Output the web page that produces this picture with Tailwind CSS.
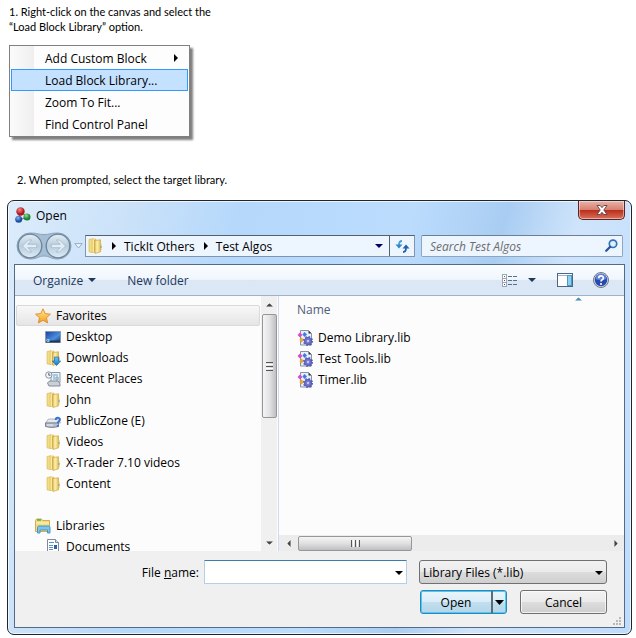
<!DOCTYPE html>
<html lang="en">
<head>
  <meta charset="UTF-8">
  <meta name="viewport" content="width=device-width, initial-scale=1.0">
  <title>Load Block Library</title>
  <script src="https://cdn.jsdelivr.net/npm/@tailwindcss/browser@4"></script>
</head>
<body class="bg-white text-black text-[12px] leading-[15px] font-['Open_Sans','Noto_Sans',sans-serif]">

  <!-- Shared icons -->
  <svg class="absolute size-0" aria-hidden="true">
    <defs>
      <linearGradient id="gold" x1="0" x2="1"><stop offset="0" stop-color="#f3da7c"/><stop offset=".5" stop-color="#faeca8"/><stop offset="1" stop-color="#dfb94c"/></linearGradient>
      <linearGradient id="star" x1="0" y1="0" x2="0" y2="1"><stop offset="0" stop-color="#fff08a"/><stop offset="1" stop-color="#f59a23"/></linearGradient>
      <linearGradient id="screen" x1="0" x2="1" y2="1"><stop offset="0" stop-color="#1c3f9c"/><stop offset=".6" stop-color="#4b8fdf"/><stop offset="1" stop-color="#123075"/></linearGradient>
      <linearGradient id="arrow" x1="0" y1="0" x2="0" y2="1"><stop offset="0" stop-color="#6ccbf7"/><stop offset="1" stop-color="#1473c4"/></linearGradient>
      <radialGradient id="red" cx=".4" cy=".3"><stop offset="0" stop-color="#f08a84"/><stop offset="1" stop-color="#b3161b"/></radialGradient>
      <radialGradient id="blue" cx=".4" cy=".3"><stop offset="0" stop-color="#8ab6ee"/><stop offset="1" stop-color="#1c4da6"/></radialGradient>
      <radialGradient id="green" cx=".4" cy=".3"><stop offset="0" stop-color="#8fe08a"/><stop offset="1" stop-color="#188032"/></radialGradient>
      <linearGradient id="orb" x1="0" y1="0" x2="0" y2="1"><stop offset="0" stop-color="#e3edf5"/><stop offset=".5" stop-color="#b9cddd"/><stop offset="1" stop-color="#dcebf6"/></linearGradient>
      <symbol id="folder" viewBox="0 0 16 16">
        <path d="M2 1.500l4-.8v13.800l-4-.6z" fill="#f3dc82" stroke="#d5b659" stroke-width=".6"/>
        <path d="M5 1h4v13.500H5z" fill="url(#gold)" stroke="#dcc069" stroke-width=".6"/>
        <path d="M8 2.500l5.500-.7v12L8 15.500z" fill="url(#gold)" stroke="#cfa844" stroke-width=".7"/>
        <path d="M13.500 6h1v6l-1 1.500z" fill="#e4c357"/>
        <path d="M7.500 2v12.500" stroke="#c9a74a" stroke-width=".8"/>
        <path d="M14 8v2" stroke="#5b93c9" stroke-width=".8"/>
      </symbol>
      <symbol id="lib" viewBox="0 0 16 16">
        <path d="M3.500.5h8l3 3v11.500h-11z" fill="#e9eef7" stroke="#7d8796" stroke-width=".9"/>
        <path d="M11.500.5v3h3z" fill="#26324a"/>
        <path d="M3 2.500l2.500 2.500L3 7.500.5 5z" fill="#d64bd0"/>
        <path d="M7.500 2L10 4.500 7.500 7 5.500 4.500z" fill="#3c7be0"/>
        <path d="M4.500 7.500L7 10l-2.500 2.500L2.300 10z" fill="#eba92b"/>
        <circle cx="11" cy="11" r="3.500" fill="#7277d0" stroke="#5156b4" stroke-width="1"/>
        <circle cx="11" cy="11" r="4.300" fill="none" stroke="#5156b4" stroke-width="1.400" stroke-dasharray="1.700 1.680"/>
        <circle cx="11" cy="11" r="1.200" fill="#c5c8f4"/>
      </symbol>
      <symbol id="down" viewBox="0 0 8 4"><path d="M0 0h8L4 4z" fill="currentColor"/></symbol>
      <symbol id="right" viewBox="0 0 4 8"><path d="M0 0v8l4-4z" fill="currentColor"/></symbol>
    </defs>
  </svg>

  <!-- Step 1 -->
  <section class="pt-1 pl-[9px]">
    <p class="text-[11px] leading-[15px] font-['Lato',sans-serif]">1. Right-click on the canvas and select the<br>“Load Block Library” option.</p>
    <div role="menu" class="mt-[11px] w-[181px] border border-[#808080] bg-[linear-gradient(to_right,#fbfbfb_0,#efefef_24px,#fdfdfd_24px)] p-px shadow-[3px_3px_2px_rgba(0,0,0,0.5)]">
      <button role="menuitem" class="flex w-full h-[22px] items-center justify-between pl-[34px] pr-[10px]">Add Custom Block <svg class="w-1 h-2"><use href="#right"/></svg></button>
      <button role="menuitem" class="flex w-full h-[22px] items-center border border-[#3399ff] bg-[#c4e1ff] pl-[33px]">Load Block Library...</button>
      <button role="menuitem" class="flex w-full h-[22px] items-center pl-[34px]">Zoom To Fit...</button>
      <button role="menuitem" class="flex w-full h-[22px] items-center pl-[34px]">Find Control Panel</button>
    </div>
  </section>

  <!-- Step 2 -->
  <p class="mt-[35px] pl-[17px] text-[11px] leading-[15px] font-['Lato',sans-serif]">2. When prompted, select the target library.</p>

  <div role="dialog" aria-label="Open" class="mt-[13px] ml-[7px] mr-1 rounded-[7px] border border-[#20242c] bg-[#b9dafb] bg-[linear-gradient(105deg,#dcecfb_0,#c9e1f9_18%,#b5d8fb_32%,#bbdcfd_55%,#a9cdf2_68%,#cfe4fb_78%,#bcdcfc_100%)] px-[6px] pb-[6px] shadow-[inset_0_0_0_1px_rgba(255,255,255,0.7)]">
    <!-- Title bar -->
    <header class="flex h-[30px] items-start justify-between pl-px">
      <div class="flex items-center gap-[5px] pt-[6px]">
        <svg class="size-4" viewBox="0 0 16 16">
          <path d="M5 4l7 6-8 3z" fill="none" stroke="#6f7f95" stroke-width="1.200"/>
          <circle cx="5.500" cy="4.500" r="4.200" fill="url(#red)"/>
          <circle cx="12" cy="10" r="3.500" fill="url(#green)"/>
          <circle cx="3.700" cy="12.300" r="3.500" fill="url(#blue)"/>
        </svg>
        <h1>Open</h1>
      </div>
      <button aria-label="Close" class="flex h-[19px] w-[47px] items-center justify-center rounded-b-[5px] border border-t-0 border-[#5b2326] bg-[linear-gradient(#e9b3a6_0,#d98070_48%,#b92c1a_50%,#d9705a_100%)] shadow-[inset_0_0_0_1px_rgba(255,255,255,0.45)]">
        <svg class="h-[10px] w-3" viewBox="0 0 12 10"><path d="M1 .5h3.200L6 2.700 7.800.5H11L7.800 5 11 9.500H7.800L6 7.300 4.200 9.500H1L4.200 5z" fill="#fff" stroke="#5d4044" stroke-width=".9"/></svg>
      </button>
    </header>

    <!-- Address row -->
    <div class="flex h-[33px] items-center pb-[3px] pl-[2px]">
      <svg class="h-[28px] w-[56px]" viewBox="0 0 56 28">
        <path d="M14 1C22 1 22 2.500 28 2.500S34 1 42 1a13 13 0 0 1 0 26c-8 0-8-3-14-3s-6 3-14 3A13 13 0 0 1 14 1z" fill="#a6bfd6" stroke="#8ba5bd"/>
        <circle cx="14" cy="14" r="11.800" fill="url(#orb)" stroke="#6d8397" stroke-width="1.300"/>
        <circle cx="42" cy="14" r="11.800" fill="url(#orb)" stroke="#6d8397" stroke-width="1.300"/>
        <path d="M6.500 14l6-6h3.200l-4 4.300h9v3.400h-9l4 4.300h-3.200z" fill="#e2edf6" stroke="#a3b9cb" stroke-width=".8"/>
        <path d="M49.500 14l-6-6h-3.200l4 4.300h-9v3.400h9l-4 4.300h3.200z" fill="#e2edf6" stroke="#a3b9cb" stroke-width=".8"/>
      </svg>
      <svg class="mx-[2px] h-[6px] w-[9px]" viewBox="0 0 9 6"><path d="M.8.600h7.400L4.500 5z" fill="#eaf4fd" stroke="#8ba5c0" stroke-width=".9"/></svg>
      <div class="flex h-[22px] min-w-0 flex-1 items-center border border-[#7f95ad] border-t-[#56606d] bg-[#edf5fe]">
        <svg class="mx-px size-4"><use href="#folder"/></svg>
        <svg class="ml-2 h-2 w-1"><use href="#right"/></svg>
        <a href="#" class="ml-2">TickIt Others</a>
        <svg class="ml-[9px] h-2 w-1"><use href="#right"/></svg>
        <a href="#" class="ml-2">Test Algos</a>
        <button aria-label="Previous locations" class="ml-auto px-[6px] text-[#00006b]"><svg class="h-1 w-2"><use href="#down"/></svg></button>
        <button aria-label="Refresh" class="flex h-full w-[25px] items-center justify-center border-l border-[#56606d]">
          <svg class="h-[13px] w-[15px]" viewBox="0 0 15 13"><path d="M7 1C4.500 1 4 2.500 4 5" fill="none" stroke="#4ba0d8" stroke-width="1.800"/><path d="M.5 4.500h7L4 8.500z" fill="#2f86cb"/><path d="M8 12c2.500 0 3-1.500 3-4" fill="none" stroke="#2360ad" stroke-width="1.800"/><path d="M7.500 8.500L11 4.500l3.500 4z" fill="#2360ad"/></svg>
        </button>
      </div>
      <div class="relative ml-[6px] mr-[2px] w-[202px]">
        <input type="search" aria-label="Search Test Algos" placeholder="Search Test Algos" class="block h-[22px] w-full rounded-[2px] border border-[#8fa6bf] border-t-[#6d7f93] bg-[#edf5fe] pl-2 pr-6 italic placeholder:text-[#6d6d6d]">
        <svg class="absolute right-[5px] top-1 size-[13px]" viewBox="0 0 13 13"><circle cx="8" cy="4.800" r="3.700" fill="#dff0fd" stroke="#3272b8" stroke-width="1.700"/><path d="M5.200 7.800L1.200 11.800" stroke="#24549c" stroke-width="2.200" stroke-linecap="round"/></svg>
      </div>
    </div>

    <div class="border border-[#566a85] bg-[#f0f0f0]">
      <!-- Toolbar -->
      <div class="flex h-[31px] items-center border-b border-[#a0b1cb] bg-[linear-gradient(#fafdff_0,#eff6fd_48%,#dbe7f5_50%,#dde8f6_100%)] pl-[18px] pr-[15px] text-[#1e395b]">
        <button class="flex items-center gap-[5px]">Organize <svg class="h-1 w-2"><use href="#down"/></svg></button>
        <button class="ml-[31px]">New folder</button>
        <button aria-label="Change your view" class="ml-auto flex items-center gap-[10px]">
          <svg class="h-[13px] w-4" viewBox="0 0 16 13" shape-rendering="crispEdges"><path d="M.5.500h4v12h-4zM.5 4.500h4M.5 8.500h4" fill="#fff" stroke="#9aa5b5"/><path d="M2 2h1v1H2z" fill="#2a8f3c"/><path d="M2 6h1v1H2z" fill="#d32020"/><path d="M2 10h1v1H2z" fill="#2453b5"/><path d="M6 2.500h10M6 6.500h10M6 10.500h10" stroke="#5c6f88" stroke-dasharray="4 1"/></svg>
          <svg class="h-1 w-2"><use href="#down"/></svg>
        </button>
        <button aria-label="Preview pane" class="ml-[21px]">
          <svg class="h-[14px] w-4" viewBox="0 0 16 14" shape-rendering="crispEdges"><path d="M.5.500h15v13H.5z" fill="#fff" stroke="#4e6585"/><path d="M1 2.500h9" stroke="#9eb0c7"/><path d="M10.500 2.500h4v10h-4z" fill="#8fd0ee" stroke="#4b9ac6"/></svg>
        </button>
        <button aria-label="Help" class="ml-5">
          <svg class="size-4" viewBox="0 0 16 16"><circle cx="8" cy="8" r="7.500" fill="#d4d9e2" stroke="#6f7888"/><circle cx="8" cy="8" r="6.200" fill="#2748b0"/><path d="M2.500 7a5.500 5.500 0 0 1 11 0c-3 1.500-8 1.500-11 0z" fill="#5d82da"/><path d="M5.700 6.200c0-3.200 4.700-3 4.700-.3C10.400 7.700 8 7.600 8 9.600" fill="none" stroke="#fff" stroke-width="1.700"/><circle cx="8" cy="12" r="1.100" fill="#fff"/></svg>
        </button>
      </div>

      <div class="flex h-[255px] bg-[#fcfcfc]">
        <!-- Navigation pane -->
        <nav class="w-[246px] shrink-0 overflow-hidden px-px pt-[9px]">
          <a href="#" class="flex h-[21px] items-center gap-[5px] rounded-[2px] border border-[#d9d9d9] bg-linear-to-b from-[#f8f8f8] to-[#e5e5e5] pl-[18px]">
            <svg class="size-4" viewBox="0 0 16 16"><path d="M8 .8l2.200 4.800 5.200.6-3.900 3.500 1.100 5.200L8 12.300l-4.600 2.600 1.100-5.200L.6 6.200l5.200-.6z" fill="url(#star)" stroke="#dd8a2b" stroke-width=".9"/></svg>Favorites</a>
          <ul class="pl-[29px]">
            <li><a href="#" class="flex h-[21px] items-center gap-[5px]"><svg class="size-4" viewBox="0 0 16 16"><path d="M.5 2.500h15v11H.5z" fill="url(#screen)" stroke="#8697ae"/><path d="M1 11.500h14v2H1z" fill="#22344f"/><circle cx="3" cy="11.500" r="1.800" fill="#78c4ee"/><path d="M2 11h1v1H2z" fill="#e0582a"/></svg>Desktop</a></li>
            <li><a href="#" class="flex h-[21px] items-center gap-[5px]"><svg class="size-4" viewBox="0 0 16 16"><use href="#folder"/><path d="M9.500 7h4v4h2.200L11.500 15.500 7.300 11h2.200z" fill="url(#arrow)" stroke="#1b6cb0" stroke-width=".7"/></svg>Downloads</a></li>
            <li><a href="#" class="flex h-[21px] items-center gap-[5px]"><svg class="size-4" viewBox="0 0 16 16"><path d="M6 1.500h9v10H6z" fill="#eef3f7" stroke="#8a97a5"/><path d="M8 4h5M8 6h2M11 6h2v3h-2zM8 8h2" fill="none" stroke="#6aa0bf"/><path d="M2.500 12l2-2h9l1.500 3v2h-11z" fill="#c9d0d6" stroke="#838e99"/><circle cx="3.800" cy="4" r="3.200" fill="#f4f7fa" stroke="#8794a2"/><path d="M3.800 2v2.200h1.700" fill="none" stroke="#4c6078"/></svg>Recent Places</a></li>
            <li><a href="#" class="flex h-[21px] items-center gap-[5px]"><svg class="size-4"><use href="#folder"/></svg>John</a></li>
            <li><a href="#" class="flex h-[21px] items-center gap-[5px]"><svg class="size-4" viewBox="0 0 16 16"><path d="M3.500 6h9.500l2.500 4H.5z" fill="#e4e8ec" stroke="#9da5ae" stroke-width=".8"/><path d="M.5 10h13v3.500c-4 1.200-9 1.200-13 0z" fill="#b8bfc9" stroke="#737c8a" stroke-width=".9"/><path d="M2 12h6" stroke="#eef1f4"/><path d="M10.700 7c0-3 4.300-2.800 4.300-.4 0 1.700-2.200 1.700-2.200 3.700M12.800 12v1.800" fill="none" stroke="#3672d8" stroke-width="1.900"/></svg>PublicZone (E)</a></li>
            <li><a href="#" class="flex h-[21px] items-center gap-[5px]"><svg class="size-4"><use href="#folder"/></svg>Videos</a></li>
            <li><a href="#" class="flex h-[21px] items-center gap-[5px]"><svg class="size-4"><use href="#folder"/></svg>X-Trader 7.10 videos</a></li>
            <li><a href="#" class="flex h-[21px] items-center gap-[5px]"><svg class="size-4"><use href="#folder"/></svg>Content</a></li>
          </ul>
          <a href="#" class="mt-[21px] flex h-[21px] items-center gap-[5px] pl-[19px]">
            <svg class="size-4" viewBox="0 0 16 16"><path d="M.5 2.500l1-1.500h5l1 1.500h7v11H.5z" fill="#f4dc83" stroke="#cfae50"/><path d="M2 2h4" stroke="#3fae49" stroke-width="1.400"/><path d="M1 5h13" stroke="#fff4c1"/><path d="M2.500 15V9.500c0-1 .7-1.500 1.500-1.500h9.500c1 0 1.500.6 1.500 1.500V15h-2.500v-3H5v3z" fill="#7dc4ea" stroke="#3c8fc3" stroke-width=".9"/></svg>Libraries</a>
          <a href="#" class="flex h-[21px] items-center gap-[5px] pl-[29px]">
            <svg class="size-4" viewBox="0 0 16 16"><path d="M2.500.5h8l3 3v12h-11z" fill="#fff" stroke="#7f8b9a"/><path d="M10.500.5v3h3" fill="#dde5ee" stroke="#7f8b9a"/><path d="M4 3.500h5M4 6.500h4M4 8.500h4M4 10.500h4M4 12.500h8" stroke="#5d93c4"/><path d="M9 6h3v4H9z" fill="#2a62b0"/></svg>Documents</a>
        </nav>

        <!-- Vertical scroll bar -->
        <div class="flex w-4 flex-col items-center bg-[#f0f0f0]">
          <span class="flex h-[18px] items-center text-[#444]"><svg class="h-1 w-[7px] rotate-180" viewBox="0 0 8 4"><use href="#down"/></svg></span>
          <span class="flex h-[104px] w-[15px] flex-col items-center justify-center gap-px rounded-[2px] border border-[#979797] bg-linear-to-r from-[#f5f5f5] via-[#e3e3e5] to-[#bfbfc4]">
            <i class="h-px w-[7px] bg-[#555]"></i><i class="h-px w-[7px] bg-white"></i><i class="h-px w-[7px] bg-[#555]"></i><i class="h-px w-[7px] bg-white"></i><i class="h-px w-[7px] bg-[#555]"></i>
          </span>
          <span class="mt-auto flex h-[17px] items-center text-[#444]"><svg class="h-1 w-[7px]" viewBox="0 0 8 4"><use href="#down"/></svg></span>
        </div>

        <!-- File list -->
        <div class="ml-px flex min-w-0 flex-1 flex-col border-l border-[#c9dcf1]">
          <div class="relative h-[31px] pl-[18px] pt-[6px] text-[#4c607a]">Name
            <svg class="absolute right-[42px] top-px h-1 w-[7px] rotate-180 text-[#4593bd]" viewBox="0 0 8 4"><use href="#down"/></svg>
          </div>
          <ul class="pl-[18px]">
            <li><a href="#" class="flex h-[21px] items-center gap-[5px]"><svg class="size-4"><use href="#lib"/></svg>Demo Library.lib</a></li>
            <li><a href="#" class="flex h-[21px] items-center gap-[5px]"><svg class="size-4"><use href="#lib"/></svg>Test Tools.lib</a></li>
            <li><a href="#" class="flex h-[21px] items-center gap-[5px]"><svg class="size-4"><use href="#lib"/></svg>Timer.lib</a></li>
          </ul>
          <!-- Horizontal scroll bar -->
          <div class="mt-auto flex h-4 items-center bg-[#ececec] text-[#444]">
            <span class="flex w-[19px] justify-center"><svg class="h-[7px] w-1 rotate-180" viewBox="0 0 4 8"><use href="#right"/></svg></span>
            <span class="flex h-[15px] w-[114px] items-center justify-center gap-px rounded-[2px] border border-[#979797] bg-linear-to-b from-[#f5f5f5] via-[#e0e0e2] to-[#bfbfc4]">
              <i class="h-[7px] w-px bg-[#555]"></i><i class="h-[7px] w-px bg-white"></i><i class="h-[7px] w-px bg-[#555]"></i><i class="h-[7px] w-px bg-white"></i><i class="h-[7px] w-px bg-[#555]"></i>
            </span>
            <svg class="ml-auto mr-[6px] h-[7px] w-1" viewBox="0 0 4 8"><use href="#right"/></svg>
          </div>
        </div>
      </div>

      <!-- Footer -->
      <form class="relative flex flex-col items-end gap-[6px] pb-[13px] pr-[17px] pt-[9px]">
        <div class="flex w-full items-center justify-end">
          <label for="file-name" class="mr-[5px]">File <u>n</u>ame:</label>
          <div class="relative w-[203px]">
            <input id="file-name" type="text" class="block h-6 w-full rounded-[1px] border border-[#b5cfe7] border-t-[#3d7bad] bg-white pl-1 pr-5">
            <svg class="absolute right-1 top-[11px] h-1 w-2"><use href="#down"/></svg>
          </div>
          <div class="relative ml-3 w-[188px]">
            <select aria-label="File type" class="block h-6 w-full appearance-none rounded-[3px] border border-[#707070] bg-[linear-gradient(#f2f2f2_0,#ebebeb_49%,#dddddd_50%,#cfcfcf_100%)] pl-[3px]"><option>Library Files (*.lib)</option></select>
            <svg class="absolute right-1 top-[11px] h-1 w-2"><use href="#down"/></svg>
          </div>
        </div>
        <div class="flex gap-[13px]">
          <div class="flex h-6 w-[87px] rounded-[3px] border border-[#3c7fb1] bg-[linear-gradient(#e9f5fb_0,#d9edf8_49%,#c0dff0_50%,#b4d5e8_100%)] shadow-[inset_0_0_0_1px_#3fd0f8]">
            <button type="button" class="flex-1 border-r-2 border-[#5e6b73]">Open</button>
            <button type="button" aria-label="More open options" class="flex w-[13px] items-center justify-center"><svg class="h-[5px] w-[9px]" viewBox="0 0 8 4" preserveAspectRatio="none"><use href="#down"/></svg></button>
          </div>
          <button type="button" class="h-6 w-[87px] rounded-[3px] border border-[#707070] bg-[linear-gradient(#f2f2f2_0,#ebebeb_49%,#dddddd_50%,#cfcfcf_100%)] shadow-[inset_0_0_0_1px_rgba(255,255,255,0.7)]">Cancel</button>
        </div>
        <svg class="absolute bottom-[2px] right-[3px] size-2" viewBox="0 0 8 8" fill="#b8b8b8"><path d="M6 0h2v2H6zM3 3h2v2H3zM6 3h2v2H6zM0 6h2v2H0zM3 6h2v2H3zM6 6h2v2H6z"/></svg>
      </form>
    </div>
  </div>
</body>
</html>
